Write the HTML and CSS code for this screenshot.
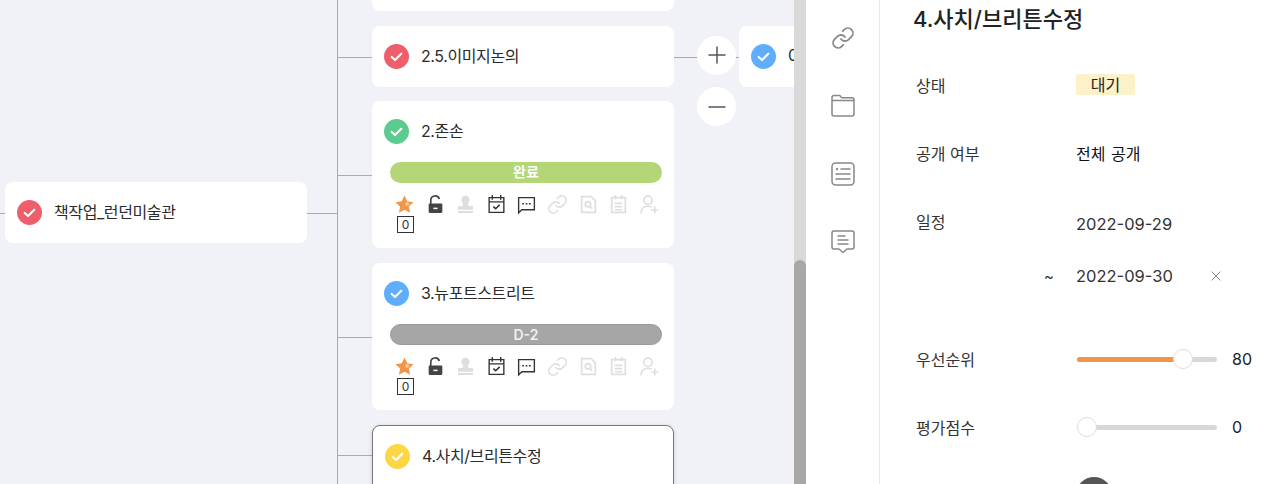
FILE: index.html
```html
<!DOCTYPE html>
<html lang="ko">
<head>
    <meta charset="UTF-8">
    <title>4.사치/브리튼수정</title>
    <link rel="stylesheet" href="styles.css">
</head>
<body>
    <svg class="defs" width="0" height="0">
        <symbol id="i-check" viewBox="0 0 24 24"><path d="M7.400 12.400l3.200 3 6-6" fill="none" stroke="#fff" stroke-width="2" stroke-linecap="round" stroke-linejoin="round"/></symbol>
        <symbol id="i-star" viewBox="0 0 20 20"><path d="M10 1.500l2.600 5.500 6 .8-4.400 4.100 1.100 6L10 15l-5.300 2.900 1.100-6L1.400 7.800l6-.8z" fill="#f0954a"/><circle cx="12.500" cy="9.500" r="1.800" fill="#f7c9a0"/></symbol>
        <symbol id="i-lock" viewBox="0 0 20 20"><path d="M5.500 9.500V6a4.200 4.200 0 0 1 8.200-1.200" fill="none" stroke="#444" stroke-width="1.600"/><rect x="3.500" y="9" width="13" height="9" rx="1" fill="#444"/><path d="M8 13h4v1.400H8z" fill="#fff"/></symbol>
        <symbol id="i-stamp" viewBox="0 0 20 20"><path d="M10 1.500a4 4 0 0 1 2.800 6.800c-.8.900-.6 2.300.4 3.200h3c.6 0 1 .4 1 1V15H2.800v-2.500c0-.6.400-1 1-1h3c1-.9 1.200-2.300.4-3.200A4 4 0 0 1 10 1.500zM2.800 16.300h14.400V18H2.800z" fill="#dedede"/></symbol>
        <symbol id="i-cal" viewBox="0 0 20 20"><g fill="none" stroke="#333" stroke-width="1.300"><path d="M3 3.500h14v14H3zM3 7.500h14M6 1v4.500M14 1v4.500"/><path d="M7 12l2.200 2 3.800-3.600" stroke-width="1.500"/></g></symbol>
        <symbol id="i-talk" viewBox="0 0 20 20"><path d="M2.500 3.500h15v11.500H5.500l-3 3z" fill="none" stroke="#333" stroke-width="1.300"/><path d="M6 8.500h1.600v1.600H6zM9.200 8.500h1.600v1.600H9.200zM12.400 8.500H14v1.600h-1.600z" fill="#333"/></symbol>
        <symbol id="i-link" viewBox="0 0 24 24"><g fill="none" stroke="currentColor" stroke-width="1.800" stroke-linecap="round"><path d="M10 13a5 5 0 0 0 7.540.54l3-3a5 5 0 0 0-7.070-7.070l-1.720 1.710"/><path d="M14 11a5 5 0 0 0-7.540-.54l-3 3a5 5 0 0 0 7.070 7.070l1.710-1.710"/></g></symbol>
        <symbol id="i-doc" viewBox="0 0 20 20"><g fill="none" stroke="#dedede" stroke-width="1.600"><path d="M3.500 2.500h9l4 4v11h-13z"/><circle cx="9.500" cy="9.800" r="2.600"/><path d="M11.500 12l2 2"/></g></symbol>
        <symbol id="i-memo" viewBox="0 0 20 20"><g fill="none" stroke="#dedede" stroke-width="1.600"><path d="M3.500 3.500h13v14h-13zM7 1v4M13 1v4M6.500 9h7M6.500 12h7M6.500 15h7"/></g></symbol>
        <symbol id="i-user" viewBox="0 0 20 20"><g fill="none" stroke="#dedede" stroke-width="1.500" stroke-linecap="round"><circle cx="8.500" cy="6" r="4"/><path d="M2 18c.3-4 3-6.300 6.500-6.300 1.200 0 2.200.2 3 .6M15 12.500v5.500M12.200 15.300h5.600"/></g></symbol>
    </svg>

    <div class="page">
        <main class="canvas">
            <div class="line line-v" style="left:337px;top:0;height:484px"></div>
            <div class="line line-h" style="left:0;top:213px;width:5px"></div>
            <div class="line line-h" style="left:307px;top:213px;width:30px"></div>
            <div class="line line-h" style="left:337px;top:57px;width:35px"></div>
            <div class="line line-h" style="left:337px;top:175px;width:35px"></div>
            <div class="line line-h" style="left:337px;top:337px;width:35px"></div>
            <div class="line line-h" style="left:337px;top:455px;width:35px"></div>
            <div class="line line-h" style="left:674px;top:57px;width:65px"></div>

            <div class="node" style="left:372px;top:-40px;height:51px"></div>

            <div class="node" style="left:5px;top:182px">
                <div class="node-head"><span class="dot dot-red"><svg><use href="#i-check"/></svg></span><span class="node-title">책작업_런던미술관</span></div>
            </div>

            <div class="node" style="left:372px;top:26px">
                <div class="node-head"><span class="dot dot-red"><svg><use href="#i-check"/></svg></span><span class="node-title">2.5.이미지논의</span></div>
            </div>

            <div class="node" style="left:372px;top:101px">
                <div class="node-head"><span class="dot dot-green"><svg><use href="#i-check"/></svg></span><span class="node-title">2.존손</span></div>
                <div class="pill pill-done">완료</div>
                <div class="tools">
                    <svg><use href="#i-star"/></svg><svg><use href="#i-lock"/></svg><svg><use href="#i-stamp"/></svg><svg><use href="#i-cal"/></svg><svg><use href="#i-talk"/></svg><svg class="off"><use href="#i-link"/></svg><svg><use href="#i-doc"/></svg><svg><use href="#i-memo"/></svg><svg><use href="#i-user"/></svg>
                    <span class="count">0</span>
                </div>
            </div>

            <div class="node" style="left:372px;top:262.800px">
                <div class="node-head"><span class="dot dot-blue"><svg><use href="#i-check"/></svg></span><span class="node-title">3.뉴포트스트리트</span></div>
                <div class="pill pill-dday">D-2</div>
                <div class="tools">
                    <svg><use href="#i-star"/></svg><svg><use href="#i-lock"/></svg><svg><use href="#i-stamp"/></svg><svg><use href="#i-cal"/></svg><svg><use href="#i-talk"/></svg><svg class="off"><use href="#i-link"/></svg><svg><use href="#i-doc"/></svg><svg><use href="#i-memo"/></svg><svg><use href="#i-user"/></svg>
                    <span class="count">0</span>
                </div>
            </div>

            <div class="node node-active" style="left:372px;top:425px">
                <div class="node-head"><span class="dot dot-yellow"><svg><use href="#i-check"/></svg></span><span class="node-title">4.사치/브리튼수정</span></div>
            </div>

            <button class="round" style="left:697px;top:35.500px">
                <svg width="20" height="20" viewBox="0 0 20 20"><path d="M10 1.500v17M1.500 10h17" stroke="#555" stroke-width="1.500"/></svg>
            </button>
            <button class="round" style="left:697px;top:87px">
                <svg width="20" height="20" viewBox="0 0 20 20"><path d="M1.500 10h17" stroke="#555" stroke-width="1.500"/></svg>
            </button>

            <div class="node" style="left:739px;top:26px">
                <div class="node-head"><span class="dot dot-blue"><svg><use href="#i-check"/></svg></span><span class="node-title">0</span></div>
            </div>
        </main>

        <div class="scrollbar"><div class="scroll-thumb"></div></div>

        <nav class="rail">
            <svg class="rail-icon rail-link"><use href="#i-link"/></svg>
            <svg class="rail-icon" viewBox="0 0 24 24"><path d="M1 6V3.500C1 2.400 1.900 1.500 3 1.500h5.500c1 0 1.400 1.800 2.500 2.300h10c1.100 0 2 .9 2 2V20c0 1.100-.9 2-2 2H3c-1.100 0-2-.9-2-2zM1 6.500h22" fill="none" stroke="#888" stroke-width="1.500"/></svg>
            <svg class="rail-icon" viewBox="0 0 24 24"><g fill="none" stroke="#888" stroke-width="1.500" stroke-linecap="round"><rect x="1" y="1" width="22" height="22" rx="3.500"/><path d="M10 7h9M5 12h14M5 17h14"/></g><circle cx="6" cy="7" r="1.200" fill="#888"/></svg>
            <svg class="rail-icon" viewBox="0 0 24 24"><g fill="none" stroke="#888" stroke-width="1.500" stroke-linecap="round" stroke-linejoin="round"><path d="M3 1h18c1.100 0 2 .9 2 2v14c0 1.100-.9 2-2 2h-5l-4 3.500L8 19H3c-1.100 0-2-.9-2-2V3c0-1.100.9-2 2-2z"/><path d="M7 6h7M7 10h10M7 14h10"/></g></svg>
        </nav>

        <aside class="detail">
            <h2 class="detail-title">4.사치/브리튼수정</h2>
            <div class="row">
                <span class="row-label">상태</span>
                <span class="tag">대기</span>
            </div>
            <div class="row">
                <span class="row-label">공개 여부</span>
                <span class="row-value">전체 공개</span>
            </div>
            <div class="row">
                <span class="row-label">일정</span>
                <span class="date date-start">2022-09-29</span>
            </div>
            <div class="row row-date-end">
                <span class="tilde">~</span>
                <span class="date">2022-09-30</span>
                <svg class="clear" width="10" height="10" viewBox="0 0 10 10"><path d="M.5.500l9 9M9.500.500l-9 9" stroke="#888" stroke-width="1"/></svg>
            </div>
            <div class="row row-slider">
                <span class="row-label row-label-slider">우선순위</span>
                <div class="slider"><div class="slider-fill" style="width:106px"></div><div class="slider-thumb" style="left:96px"></div></div>
                <span class="slider-value">80</span>
            </div>
            <div class="row">
                <span class="row-label row-label-slider">평가점수</span>
                <div class="slider"><div class="slider-thumb" style="left:0"></div></div>
                <span class="slider-value">0</span>
            </div>
            <div class="row row-avatar"><span class="avatar"></span></div>
        </aside>
    </div>
</body>
</html>
```

FILE: styles.css
```css
html, body {
    margin: 0;
    height: 484px;
    overflow: hidden;
}
body {
    font-family: Inter, "Noto Sans CJK KR", sans-serif;
    color: #333;
    background-color: #fff;
}
.defs {
    position: absolute;
}
.page {
    display: flex;
    height: 484px;
    overflow: hidden;
}

/* map */
.canvas {
    position: relative;
    width: 794px;
    flex: none;
    overflow: hidden;
    background-color: #f0f2f8;
}
.line {
    position: absolute;
    background-color: #aaa;
}
.line-v {
    width: 1px;
}
.line-h {
    height: 1px;
}
.node {
    position: absolute;
    box-sizing: border-box;
    width: 302px;
    min-height: 51px;
    background-color: #fff;
    border-radius: 8px;
}
.node-active {
    border: 1px solid #777;
    box-shadow: 0 1px 4px rgba(0, 0, 0, 0.15);
    height: 80px;
}
.node-head {
    display: flex;
    align-items: center;
    gap: 12px;
    height: 61px;
    padding-left: 12px;
}
.node-active .node-head {
    height: 60px;
}
.dot {
    width: 25px;
    height: 25px;
    border-radius: 50%;
    flex: none;
}
.dot svg {
    display: block;
    width: 25px;
    height: 25px;
}
.dot-red { background-color: #ee5f6b; }
.dot-green { background-color: #5ccb8f; }
.dot-blue { background-color: #5eaefd; }
.dot-yellow { background-color: #fdd644; }
.node-title {
    margin-top: -3px;
    font-size: 16px;
    letter-spacing: -0.4px;
    color: #2b2b2b;
    white-space: nowrap;
}
.pill {
    box-sizing: border-box;
    height: 21px;
    margin: 0 12px 0 18px;
    border-radius: 11px;
    text-align: center;
    font-size: 14px;
    font-weight: 600;
    line-height: 20px;
    color: #fff;
}
.pill-done {
    background-color: #b3d776;
}
.pill-dday {
    background-color: #a6a6a6;
    border: 1px solid #989898;
    line-height: 19px;
    color: #f0f0f0;
}
.tools {
    display: flex;
    flex-wrap: wrap;
    align-items: center;
    padding: 11px 0 15px 22px;
}
.tools svg {
    width: 21px;
    height: 21px;
    margin: 0 9.600px 1px 0;
}
.tools .off {
    color: #dedede;
}
.count {
    box-sizing: border-box;
    width: 17px;
    height: 17px;
    margin: 0 0 0 3px;
    border: 1px solid #333;
    font-size: 12px;
    line-height: 15px;
    text-align: center;
    color: #333;
}
.round {
    position: absolute;
    display: flex;
    align-items: center;
    justify-content: center;
    width: 39px;
    height: 39px;
    padding: 0;
    border: none;
    border-radius: 50%;
    background-color: #fff;
}

/* scrollbar */
.scrollbar {
    width: 12px;
    flex: none;
    padding-top: 260px;
    box-sizing: border-box;
    background-color: #d9d9d9;
}
.scroll-thumb {
    height: 240px;
    border-radius: 6px;
    background-color: #a8a8a8;
}

/* icon rail */
.rail {
    box-sizing: border-box;
    width: 74px;
    flex: none;
    display: flex;
    flex-direction: column;
    align-items: center;
    gap: 44px;
    padding: 26px 0 0 0;
    border-right: 1px solid #e9e9e9;
}
.rail-icon {
    width: 24px;
    height: 24px;
}
.rail-link {
    color: #888;
}

/* detail panel */
.detail {
    flex: 1;
    padding-left: 33px;
    font-size: 16px;
}
.detail-title {
    margin: 0;
    padding-top: 3px;
    height: 50px;
    box-sizing: border-box;
    font-size: 22px;
    font-weight: 500;
    line-height: 32px;
    color: #222;
}
.row {
    display: flex;
    align-items: center;
    height: 68px;
    padding-left: 3px;
}
.row-label {
    width: 160px;
    flex: none;
    margin-top: 2px;
    color: #333;
}
.row-label-slider {
    margin-top: 0;
}
.tag {
    width: 59px;
    height: 21px;
    border-radius: 2px;
    background-color: #fdf1c9;
    text-align: center;
    line-height: 22px;
    color: #222;
}
.row-value {
    margin-top: 2px;
    color: #111;
    word-spacing: 1px;
}
.date {
    font-size: 16.500px;
    color: #333;
}
.date-start {
    margin-top: 8px;
}
.row-date-end {
    height: 34px;
    margin-top: 5px;
}
.tilde {
    width: 160px;
    flex: none;
    box-sizing: border-box;
    padding-left: 128px;
    font-size: 15px;
}
.clear {
    margin-left: 38px;
}
.row-slider {
    margin-top: 32px;
}
.slider {
    position: relative;
    width: 140px;
    height: 5px;
    margin-left: 1px;
    border-radius: 3px;
    background-color: #d8d8d8;
}
.slider-fill {
    height: 5px;
    border-radius: 3px;
    background-color: #f0954a;
}
.slider-thumb {
    position: absolute;
    top: -8px;
    box-sizing: border-box;
    width: 20px;
    height: 20px;
    border: 1px solid #ddd;
    border-radius: 50%;
    background-color: #fff;
}
.slider-value {
    margin-left: 15px;
    font-size: 16px;
    color: #222;
}
.avatar {
    width: 36px;
    height: 36px;
    margin-left: 160px;
    border-radius: 50%;
    background-color: #555;
}
```
